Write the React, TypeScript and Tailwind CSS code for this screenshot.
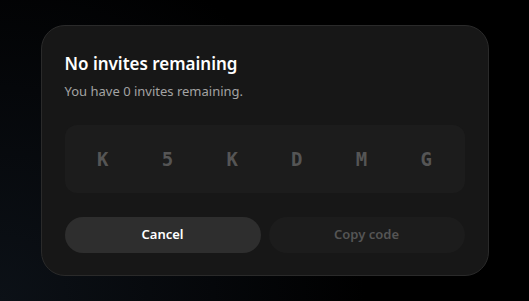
import React from "react";

const CODE = ["K", "5", "K", "D", "M", "G"];

export default function App() {
  return (
    <div
      className="w-[529px] h-[301px] bg-black bg-[radial-gradient(circle_at_0%_100%,#0c1117_0%,#05070a_35%,#000_60%)] flex items-start justify-center pt-[25px]"
      style={{ fontFamily: '"Noto Sans", "Open Sans", sans-serif' }}
    >
      <div className="w-[448px] h-[251px] rounded-[24px] border border-[#2a2a2a] bg-[#171717] px-[23px] pt-[25px] pb-[22px] flex flex-col">
        <h2 className="text-[17px] leading-[26px] font-semibold text-white">No invites remaining</h2>
        <p className="mt-[5px] text-[13px] leading-[18px] text-[#a3a3a3]">You have 0 invites remaining.</p>

        <div className="mt-[25px] h-[68px] rounded-[12px] bg-[#1c1c1c] grid grid-cols-6 items-center px-[6px]">
          {CODE.map((c, i) => (
            <span
              key={i}
              className="text-center text-[19px] font-bold text-[#555555]"
              style={{ fontFamily: '"DejaVu Sans Mono", "Liberation Mono", monospace' }}
            >
              {c}
            </span>
          ))}
        </div>

        <div className="mt-auto flex gap-[8px]">
          <button className="flex-1 h-[36px] rounded-full bg-[#2e2e2e] text-white text-[13px] font-semibold">
            Cancel
          </button>
          <button className="flex-1 h-[36px] rounded-full bg-[#1c1c1c] text-[#555555] text-[13px] font-semibold">
            Copy code
          </button>
        </div>
      </div>
    </div>
  );
}
